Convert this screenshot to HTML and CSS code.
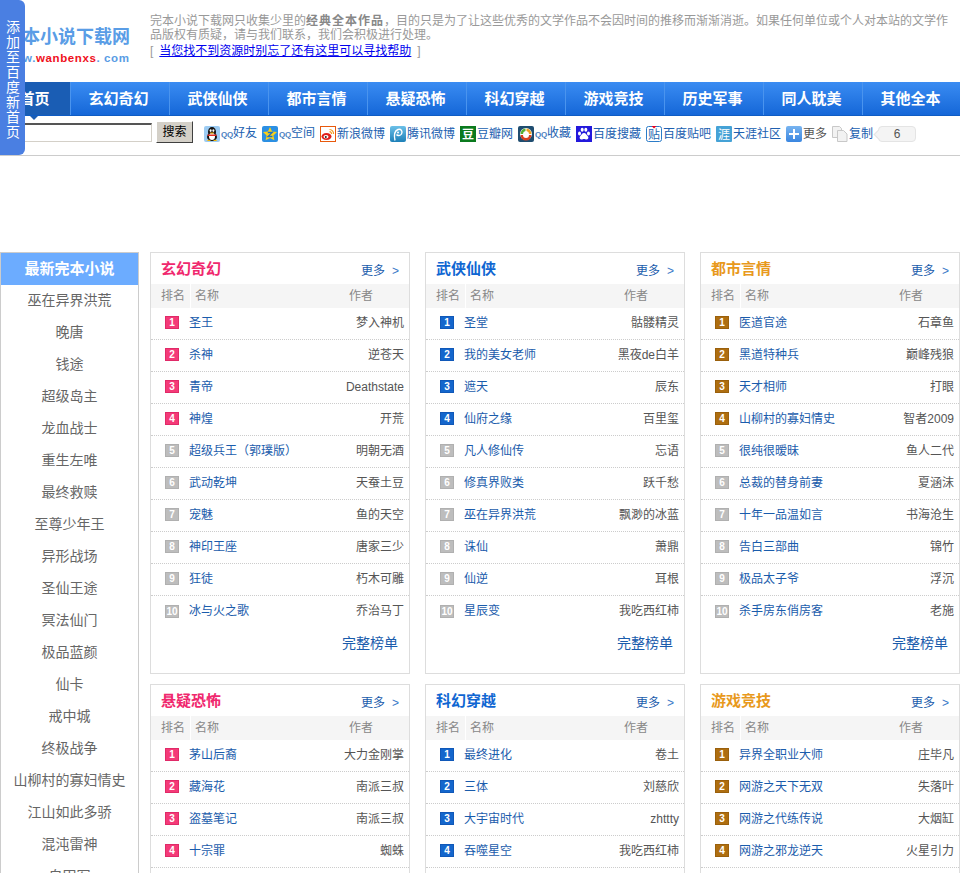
FILE: index.html
```html
<!DOCTYPE html>
<html lang="zh-CN">
<head>
<meta charset="utf-8">
<title>完本小说下载网</title>
<link rel="stylesheet" href="styles.css">
</head>
<body>
<a class="side-tab" href="#">添加至百度新首页</a>
<header class="top">
  <a class="logo" href="#">
    <span class="logo-name">完本小说下载网</span>
    <span class="logo-url">www.<b>wanbenxs</b>.&nbsp;com</span>
  </a>
  <div class="intro">
    <p>完本小说下载网只收集少里的<b>经典全本作品</b>，目的只是为了让这些优秀的文学作品不会因时间的推移而渐渐消逝。如果任何单位或个人对本站的文学作品版权有质疑，请与我们联系，我们会积极进行处理。</p>
    <p class="intro-help"><span class="br-l">[</span><a href="#">当您找不到资源时别忘了还有这里可以寻找帮助</a><span class="br-r">]</span></p>
  </div>
</header>
<nav class="nav">
  <a class="nav-home" href="#">首页</a>
  <a href="#">玄幻奇幻</a>
  <a href="#">武侠仙侠</a>
  <a href="#">都市言情</a>
  <a href="#">悬疑恐怖</a>
  <a href="#">科幻穿越</a>
  <a href="#">游戏竞技</a>
  <a href="#">历史军事</a>
  <a href="#">同人耽美</a>
  <a href="#">其他全本</a>
</nav>
<div class="tools">
  <input class="search-input" type="text">
  <button class="search-btn" type="button">搜索</button>
  <div class="share">
    <a href="#"><svg viewBox="0 0 16 16"><rect width="16" height="16" rx="2" fill="#9ccbf2"/><ellipse cx="8" cy="6" rx="4" ry="5" fill="#111"/><ellipse cx="8" cy="11" rx="5" ry="4" fill="#111"/><ellipse cx="8" cy="10.5" rx="3" ry="3.4" fill="#fff"/><ellipse cx="6.6" cy="4.6" rx="1" ry="1.3" fill="#fff"/><ellipse cx="9.4" cy="4.6" rx="1" ry="1.3" fill="#fff"/><path d="M5.5 6.5h5l-2.500 1.400z" fill="#f5b400"/><path d="M3.500 8.500h9v1.500h-9z" fill="#e02a1c"/><path d="M2.500 15l2.500-1.500 2 1.500zM9 15l2-1.500 2.500 1.500z" fill="#f5b400"/></svg><span class="sl"><i>QQ</i>好友</span></a>
    <a href="#"><svg viewBox="0 0 16 16"><rect width="16" height="16" rx="2" fill="#2b8fe3"/><path d="M8 1l2.100 4.500 4.900.6-3.600 3.300 1 4.900L8 11.900l-4.400 2.400 1-4.900L1 6.100l4.900-.6z" fill="#fcd116"/><path d="M5.800 6.500h4.400L6 10.500h4.400" fill="none" stroke="#1c6fc4" stroke-width="1.300"/></svg><span class="sl"><i>QQ</i>空间</span></a>
    <a href="#"><svg viewBox="0 0 16 16"><rect x=".5" y=".5" width="15" height="15" fill="#fff" stroke="#e8590c"/><ellipse cx="6.500" cy="10.500" rx="5" ry="3.500" fill="#e0201c"/><ellipse cx="6" cy="10.800" rx="2.500" ry="1.800" fill="#fff"/><circle cx="5.800" cy="10.900" r="1" fill="#222"/><path d="M9.500 3.500a4 4 0 0 1 4 4.500M9.500 5.700a2 2 0 0 1 2 2.300" fill="none" stroke="#f39a1e" stroke-width="1.200"/></svg><span class="sl">新浪微博</span></a>
    <a href="#"><svg viewBox="0 0 16 16"><defs><linearGradient id="tw" x1="0" y1="0" x2="0" y2="1"><stop offset="0" stop-color="#6cc0e8"/><stop offset="1" stop-color="#1d80b8"/></linearGradient></defs><rect width="16" height="16" rx="2" fill="url(#tw)"/><path d="M5 14.500C4 10 4.500 5 8 3.500c3-1 5 2 3.500 4.500-1.200 2-4 2-5 .5" fill="none" stroke="#fff" stroke-width="1.400"/><circle cx="8" cy="6.500" r="1" fill="#fff"/></svg><span class="sl">腾讯微博</span></a>
    <a href="#"><svg viewBox="0 0 16 16"><rect width="16" height="16" fill="#0b7a1e"/><text x="8" y="13" class="ico-text" fill="#fff" font-weight="700">豆</text></svg><span class="sl">豆瓣网</span></a>
    <a href="#"><svg viewBox="0 0 16 16"><rect width="16" height="16" rx="2" fill="#1f4d70"/><circle cx="8" cy="8" r="6" fill="#fff"/><path d="M2.500 8a5.500 5.500 0 0 1 5-5.500v2.500a3 3 0 0 0-2.500 3z" fill="#58b030"/><path d="M8.500 2.500a5.500 5.500 0 0 1 5 5.500H11a3 3 0 0 0-2.500-3z" fill="#f0a020"/><path d="M13.500 9a5.500 5.500 0 0 1-11 0H5a3 3 0 0 0 6 0z" fill="#d84020"/></svg><span class="sl"><i>QQ</i>收藏</span></a>
    <a href="#"><svg viewBox="0 0 16 16"><rect width="16" height="16" fill="#2319dc"/><ellipse cx="3.500" cy="7.500" rx="1.500" ry="2" fill="#fff"/><ellipse cx="6.200" cy="3.800" rx="1.500" ry="2" fill="#fff"/><ellipse cx="9.800" cy="3.800" rx="1.500" ry="2" fill="#fff"/><ellipse cx="12.500" cy="7.500" rx="1.500" ry="2" fill="#fff"/><path d="M8 7c2 0 2.500 2 4 3.500 1 1.500 0 3-1.500 3-1 0-1.500-.5-2.500-.5s-1.500.5-2.500.5c-1.500 0-2.500-1.500-1.500-3C5.500 9 6 7 8 7z" fill="#fff"/></svg><span class="sl">百度搜藏</span></a>
    <a href="#"><svg viewBox="0 0 16 16"><rect x=".5" y=".5" width="15" height="15" rx="2" fill="#fff" stroke="#2b7cc8"/><path d="M5.500 0h5L8 2.500z" fill="#e8001c"/><text x="8" y="13" class="ico-text" fill="#2468b0">贴</text></svg><span class="sl">百度贴吧</span></a>
    <a href="#"><svg viewBox="0 0 16 16"><rect width="16" height="16" rx="1" fill="#45a2d6"/><text x="8" y="13" class="ico-text" fill="#fff">涯</text></svg><span class="sl">天涯社区</span></a>
    <a href="#"><svg viewBox="0 0 16 16"><defs><linearGradient id="mo" x1="0" y1="0" x2="0" y2="1"><stop offset="0" stop-color="#78b4f0"/><stop offset="1" stop-color="#3a86e0"/></linearGradient></defs><rect width="16" height="16" rx="2" fill="url(#mo)"/><path d="M7 3h2v4h4v2H9v4H7V9H3V7h4z" fill="#fff"/></svg><span class="sl sl-more">更多</span></a>
    <a href="#"><svg viewBox="0 0 16 16"><path d="M.500.500h7l2 2v9h-9z" fill="#f2f2f2" stroke="#c8c8c8"/><path d="M5.500 4.500h6l3.500 3.500v7.500H5.500z" fill="#f2f2f2" stroke="#c8c8c8"/></svg><span class="sl">复制</span></a>
    <span class="count">6</span>
  </div>
</div>
<div class="ad-slot"></div>
<main class="main">
  <aside class="latest">
    <h2>最新完本小说</h2>
    <a href="#">巫在异界洪荒</a>
    <a href="#">晚唐</a>
    <a href="#">钱途</a>
    <a href="#">超级岛主</a>
    <a href="#">龙血战士</a>
    <a href="#">重生左唯</a>
    <a href="#">最终救赎</a>
    <a href="#">至尊少年王</a>
    <a href="#">异形战场</a>
    <a href="#">圣仙王途</a>
    <a href="#">冥法仙门</a>
    <a href="#">极品蓝颜</a>
    <a href="#">仙卡</a>
    <a href="#">戒中城</a>
    <a href="#">终极战争</a>
    <a href="#">山柳村的寡妇情史</a>
    <a href="#">江山如此多骄</a>
    <a href="#">混沌雷神</a>
    <a href="#">自田军</a>
  </aside>
  <div class="boxes">
    <section class="box pink">
      <div class="box-head"><h3>玄幻奇幻</h3><a class="more" href="#">更多<span>&gt;</span></a></div>
      <div class="cols"><span class="c-rank">排名</span><span class="c-name">名称</span><span class="c-auth">作者</span></div>
      <div class="row"><b class="rank">1</b><a href="#">圣王</a><span>梦入神机</span></div>
      <div class="row"><b class="rank">2</b><a href="#">杀神</a><span>逆苍天</span></div>
      <div class="row"><b class="rank">3</b><a href="#">青帝</a><span>Deathstate</span></div>
      <div class="row"><b class="rank">4</b><a href="#">神煌</a><span>开荒</span></div>
      <div class="row"><b class="rank low">5</b><a href="#">超级兵王（郭璞版）</a><span>明朝无酒</span></div>
      <div class="row"><b class="rank low">6</b><a href="#">武动乾坤</a><span>天蚕土豆</span></div>
      <div class="row"><b class="rank low">7</b><a href="#">宠魅</a><span>鱼的天空</span></div>
      <div class="row"><b class="rank low">8</b><a href="#">神印王座</a><span>唐家三少</span></div>
      <div class="row"><b class="rank low">9</b><a href="#">狂徒</a><span>朽木可雕</span></div>
      <div class="row last"><b class="rank low">10</b><a href="#">冰与火之歌</a><span>乔治马丁</span></div>
      <div class="box-foot"><a href="#">完整榜单</a></div>
    </section>
    <section class="box blue">
      <div class="box-head"><h3>武侠仙侠</h3><a class="more" href="#">更多<span>&gt;</span></a></div>
      <div class="cols"><span class="c-rank">排名</span><span class="c-name">名称</span><span class="c-auth">作者</span></div>
      <div class="row"><b class="rank">1</b><a href="#">圣堂</a><span>骷髅精灵</span></div>
      <div class="row"><b class="rank">2</b><a href="#">我的美女老师</a><span>黑夜de白羊</span></div>
      <div class="row"><b class="rank">3</b><a href="#">遮天</a><span>辰东</span></div>
      <div class="row"><b class="rank">4</b><a href="#">仙府之缘</a><span>百里玺</span></div>
      <div class="row"><b class="rank low">5</b><a href="#">凡人修仙传</a><span>忘语</span></div>
      <div class="row"><b class="rank low">6</b><a href="#">修真界败类</a><span>跃千愁</span></div>
      <div class="row"><b class="rank low">7</b><a href="#">巫在异界洪荒</a><span>飘渺的冰蓝</span></div>
      <div class="row"><b class="rank low">8</b><a href="#">诛仙</a><span>萧鼎</span></div>
      <div class="row"><b class="rank low">9</b><a href="#">仙逆</a><span>耳根</span></div>
      <div class="row last"><b class="rank low">10</b><a href="#">星辰变</a><span>我吃西红柿</span></div>
      <div class="box-foot"><a href="#">完整榜单</a></div>
    </section>
    <section class="box amber">
      <div class="box-head"><h3>都市言情</h3><a class="more" href="#">更多<span>&gt;</span></a></div>
      <div class="cols"><span class="c-rank">排名</span><span class="c-name">名称</span><span class="c-auth">作者</span></div>
      <div class="row"><b class="rank">1</b><a href="#">医道官途</a><span>石章鱼</span></div>
      <div class="row"><b class="rank">2</b><a href="#">黑道特种兵</a><span>巅峰残狼</span></div>
      <div class="row"><b class="rank">3</b><a href="#">天才相师</a><span>打眼</span></div>
      <div class="row"><b class="rank">4</b><a href="#">山柳村的寡妇情史</a><span>智者2009</span></div>
      <div class="row"><b class="rank low">5</b><a href="#">很纯很暧昧</a><span>鱼人二代</span></div>
      <div class="row"><b class="rank low">6</b><a href="#">总裁的替身前妻</a><span>夏涵沫</span></div>
      <div class="row"><b class="rank low">7</b><a href="#">十年一品温如言</a><span>书海沧生</span></div>
      <div class="row"><b class="rank low">8</b><a href="#">告白三部曲</a><span>锦竹</span></div>
      <div class="row"><b class="rank low">9</b><a href="#">极品太子爷</a><span>浮沉</span></div>
      <div class="row last"><b class="rank low">10</b><a href="#">杀手房东俏房客</a><span>老施</span></div>
      <div class="box-foot"><a href="#">完整榜单</a></div>
    </section>
    <section class="box pink">
      <div class="box-head"><h3>悬疑恐怖</h3><a class="more" href="#">更多<span>&gt;</span></a></div>
      <div class="cols"><span class="c-rank">排名</span><span class="c-name">名称</span><span class="c-auth">作者</span></div>
      <div class="row"><b class="rank">1</b><a href="#">茅山后裔</a><span>大力金刚掌</span></div>
      <div class="row"><b class="rank">2</b><a href="#">藏海花</a><span>南派三叔</span></div>
      <div class="row"><b class="rank">3</b><a href="#">盗墓笔记</a><span>南派三叔</span></div>
      <div class="row"><b class="rank">4</b><a href="#">十宗罪</a><span>蜘蛛</span></div>
    </section>
    <section class="box blue">
      <div class="box-head"><h3>科幻穿越</h3><a class="more" href="#">更多<span>&gt;</span></a></div>
      <div class="cols"><span class="c-rank">排名</span><span class="c-name">名称</span><span class="c-auth">作者</span></div>
      <div class="row"><b class="rank">1</b><a href="#">最终进化</a><span>卷土</span></div>
      <div class="row"><b class="rank">2</b><a href="#">三体</a><span>刘慈欣</span></div>
      <div class="row"><b class="rank">3</b><a href="#">大宇宙时代</a><span>zhttty</span></div>
      <div class="row"><b class="rank">4</b><a href="#">吞噬星空</a><span>我吃西红柿</span></div>
    </section>
    <section class="box amber">
      <div class="box-head"><h3>游戏竞技</h3><a class="more" href="#">更多<span>&gt;</span></a></div>
      <div class="cols"><span class="c-rank">排名</span><span class="c-name">名称</span><span class="c-auth">作者</span></div>
      <div class="row"><b class="rank">1</b><a href="#">异界全职业大师</a><span>庄毕凡</span></div>
      <div class="row"><b class="rank">2</b><a href="#">网游之天下无双</a><span>失落叶</span></div>
      <div class="row"><b class="rank">3</b><a href="#">网游之代练传说</a><span>大烟缸</span></div>
      <div class="row"><b class="rank">4</b><a href="#">网游之邪龙逆天</a><span>火星引力</span></div>
    </section>
  </div>
</main>
</body>
</html>
```
FILE: styles.css
```css
* { box-sizing: border-box; }
html, body {
  margin: 0;
  height: 873px;
  overflow: hidden;
}
body {
  position: relative;
  width: 960px;
  background: #fff;
  font: 12px/14px "Liberation Sans", "Noto Sans CJK SC", sans-serif;
  color: #555;
}
a { text-decoration: none; color: #1a5cac; }
p, h2, h3 { margin: 0; }

.side-tab {
  position: absolute;
  left: 0;
  top: 0;
  z-index: 5;
  width: 25px;
  height: 155px;
  padding: 20px 5px 0 6px;
  background: #4a7fe2;
  border-radius: 0 6px 6px 0;
  color: #fff;
  font-size: 14px;
  line-height: 15px;
  text-align: center;
}

.top { display: flex; height: 82px; }
.logo {
  width: 150px;
  padding: 27px 0 0 4px;
  flex: none;
}
.logo-name {
  display: block;
  font-size: 18px;
  line-height: 20px;
  font-weight: 700;
  color: #5a9de6;
  white-space: nowrap;
}
.logo-url {
  display: block;
  margin: 4px 0 0 0;
  font-size: 11.500px;
  line-height: 14px;
  font-weight: 700;
  color: #5a9ce4;
  letter-spacing: 0.600px;
  white-space: nowrap;
}
.logo-url b { color: #f0101c; }
.intro {
  width: 804px;
  padding-top: 14px;
  color: #999;
}
.intro b { color: #888; letter-spacing: 1px; }
.intro-help { margin-top: 2px; }
.intro-help a { color: #0000ee; text-decoration: underline; }
.br-l { margin-right: 6px; }
.br-r { margin-left: 6px; }

.nav {
  position: relative;
  display: flex;
  height: 34px;
  overflow: hidden;
  background: linear-gradient(#3a8cf2, #1567d8);
  border-bottom: 1px solid #0f5cc4;
}
.nav a {
  flex: none;
  width: 99px;
  padding-right: 3px;
  border-left: 1px solid #4a94ee;
  color: #fff;
  font-size: 15px;
  font-weight: 700;
  line-height: 33px;
  text-align: center;
}
.nav .nav-home {
  width: 70px;
  padding-right: 0;
  background: #1a5db4;
  border-left: 0;
  border-right: 1px solid #1a5db4;
}

.tools {
  position: relative;
  display: flex;
  align-items: flex-start;
  height: 40px;
  padding: 5px 0 0 10px;
  border-bottom: 1px solid #ccc;
}
.tools::before {
  content: "";
  position: absolute;
  left: 30px;
  top: 0;
  border: 4px solid transparent;
  border-top-color: #1a5db4;
  border-bottom: 0;
  border-left-width: 4.500px;
  border-right-width: 4.500px;
}
.search-input {
  width: 142px;
  height: 19px;
  margin: 2px 0 0;
  padding: 0;
  border: 1px solid #d4d0c8;
  border-top: 2px solid #555;
  border-left-color: #888;
  background: #fff;
}
.search-btn {
  width: 37px;
  height: 22px;
  margin: 0 0 0 4px;
  padding: 0;
  background: #d4d0c8;
  border: 1px solid;
  border-color: #fff #404040 #404040 #fff;
  color: #000;
  font: 12px/18px "Liberation Sans", "Noto Sans CJK SC", sans-serif;
}
.share {
  display: flex;
  align-items: center;
  margin: 4px 0 0 11px;
}
.share a {
  display: flex;
  align-items: center;
  margin-right: 5px;
  color: #2060b0;
}
.share svg { width: 16px; height: 16px; margin-right: 1px; flex: none; }
.ico-text {
  font-size: 12px;
  text-anchor: middle;
  font-family: "Noto Sans CJK SC", sans-serif;
}
.sl { white-space: nowrap; line-height: 16px; }
.sl i {
  font-style: normal;
  font-size: 8px;
  color: #4a80c0;
  font-weight: 700;
  letter-spacing: -0.250px;
}
.sl-more { color: #555; }
.count {
  position: relative;
  width: 38px;
  height: 16px;
  background: #f4f4f4;
  border: 1px solid #e4e4e4;
  border-radius: 4px;
  font-size: 12px;
  line-height: 14px;
  text-align: center;
  color: #555;
}
.count::before {
  content: "";
  position: absolute;
  left: -4px;
  top: 4px;
  width: 6px;
  height: 6px;
  background: #f4f4f4;
  border-left: 1px solid #e4e4e4;
  border-bottom: 1px solid #e4e4e4;
  transform: rotate(45deg);
}

.ad-slot { height: 96px; }

.main { display: flex; align-items: flex-start; }
.latest {
  flex: none;
  width: 139px;
  margin-right: 11px;
  border: 1px solid #ccc;
  border-bottom: 0;
}
.latest h2 {
  height: 32px;
  background: #6cacff;
  color: #fff;
  font-size: 15px;
  font-weight: 700;
  line-height: 31px;
  text-align: center;
}
.latest a {
  display: block;
  height: 32px;
  color: #666;
  font-size: 14px;
  line-height: 30px;
  text-align: center;
  white-space: nowrap;
}

.boxes {
  display: grid;
  grid-template-columns: repeat(3, 260px);
  column-gap: 15px;
  row-gap: 10px;
}
.box {
  height: 422px;
  border: 1px solid #ddd;
}
.box-head {
  display: flex;
  align-items: center;
  justify-content: space-between;
  height: 31px;
  padding: 1px 10px 0;
}
.box-head h3 { font-size: 15px; font-weight: 700; }
.pink h3 { color: #f0286e; }
.blue h3 { color: #0f66d2; }
.amber h3 { color: #e8991c; }
.more { color: #1a5cac; margin-top: 3px; }
.more span { margin-left: 7px; font-size: 12px; color: #3a78c8; }
.cols {
  display: flex;
  height: 24px;
  background: #f5f5f5;
  color: #888;
  line-height: 24px;
}
.c-rank {
  width: 40px;
  padding-left: 10px;
  border-right: 1px solid #fff;
}
.c-name { width: 158px; padding-left: 4px; }
.row {
  display: flex;
  align-items: center;
  height: 32px;
  padding: 0 5px 2px 14px;
  border-bottom: 1px dotted #ccc;
}
.row.last { border-bottom: 0; }
.row a { margin-left: 10px; flex: none; }
.row span { margin-left: auto; white-space: nowrap; color: #555; }
.rank {
  width: 14px;
  height: 13px;
  flex: none;
  font: 700 10px/11px "Liberation Sans", sans-serif;
  text-align: center;
  color: #fff;
  border: 1px solid;
}
.pink .rank { background: #f43a78; border-color: #e02a68; }
.blue .rank { background: #1466cc; border-color: #1058b8; }
.amber .rank { background: #ae6e10; border-color: #9a600c; }
.box .rank.low { background: #bdbdbd; border-color: #b0b0b0; }
.box-foot {
  height: 45px;
  padding: 6px 11px 0 0;
  text-align: right;
  font-size: 14px;
  line-height: 18px;
}
```
